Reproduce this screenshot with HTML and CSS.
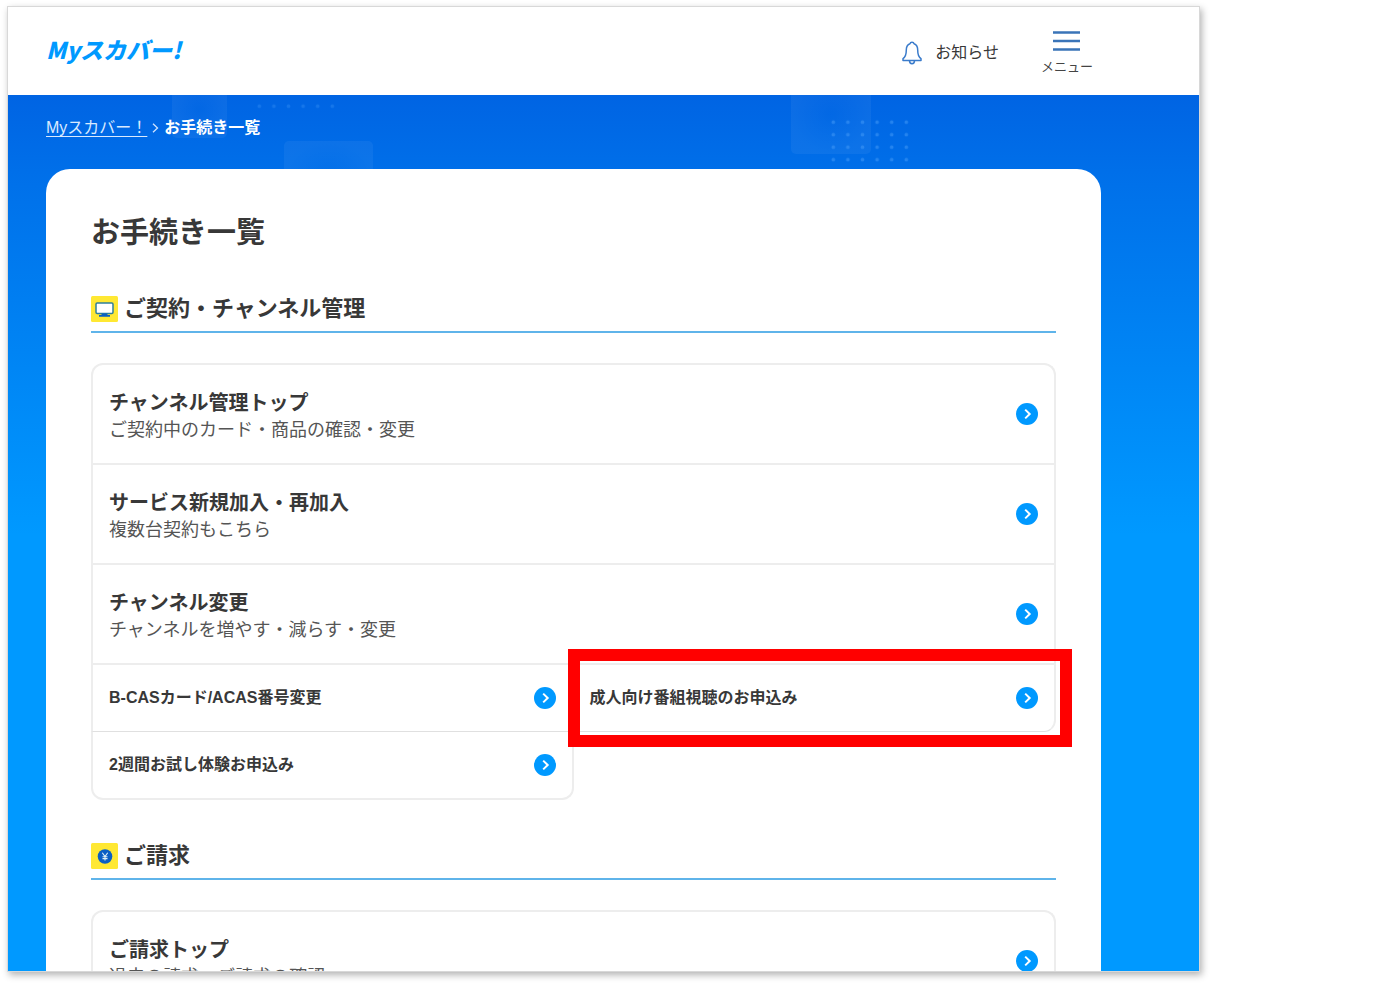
FILE: index.html
```html
<!DOCTYPE html>
<html lang="ja">
<head>
<meta charset="utf-8">
<meta name="viewport" content="width=device-width, initial-scale=1">
<title>お手続き一覧</title>
<link rel="stylesheet" href="styles.css">
</head>
<body>
<svg class="defs" aria-hidden="true">
  <symbol id="arrow" viewBox="0 0 22 22">
    <circle cx="11" cy="11" r="11" fill="#0099ff"/>
    <path d="M9.200 6.600 13.700 11l-4.500 4.400" fill="none" stroke="#fff" stroke-width="2"/>
  </symbol>
</svg>
<div class="window">
  <header class="header">
    <a class="logo" href="#">Myスカバー!</a>
    <nav class="header-nav">
      <a class="news" href="#">
        <svg class="bell" viewBox="0 0 20 24" fill="none" stroke="#3a7bcb" stroke-width="1.500" stroke-linejoin="round" aria-hidden="true">
          <path d="M10 1.200c-1.200 0-1.900.7-2.100 1.600C5.300 3.700 4.300 5.900 4.300 9c0 4.500-.8 7-3.300 8.700v1.800h18v-1.800c-2.500-1.700-3.300-4.200-3.300-8.700 0-3.100-1-5.300-3.600-6.200C11.900 1.900 11.200 1.200 10 1.200Z"/>
          <path d="M7.500 19.500c0 4.300 5 4.300 5 0"/>
        </svg>
        <span>お知らせ</span>
      </a>
      <button class="menu" type="button">
        <svg class="burger" viewBox="0 0 27 20" stroke="#3a74b8" stroke-width="2.400" aria-hidden="true"><path d="M0 1.500h27M0 10h27M0 18.500h27"/></svg>
        <span>メニュー</span>
      </button>
    </nav>
  </header>
  <main class="hero">
    <svg class="decor" width="1000" height="75" aria-hidden="true">
      <defs>
        <pattern id="dots" width="14.600" height="12.500" patternUnits="userSpaceOnUse" x="818" y="21">
          <circle cx="7.300" cy="6.200" r="1.800" fill="#3c95f5" fill-opacity=".6"/>
        </pattern>
        <pattern id="dots-faint" width="14.600" height="12.500" patternUnits="userSpaceOnUse" x="244" y="5">
          <circle cx="7.300" cy="6.200" r="1.800" fill="#3c95f5" fill-opacity=".35"/>
        </pattern>
        <radialGradient id="tile"><stop offset="0" stop-color="#fff" stop-opacity=".01"/><stop offset="1" stop-color="#fff" stop-opacity=".05"/></radialGradient>
      </defs>
      <rect x="164" y="-12" width="55" height="55" rx="5" fill="url(#tile)"/>
      <rect x="276" y="46" width="89" height="70" rx="5" fill="url(#tile)"/>
      <rect x="783" y="-20" width="80" height="79" rx="5" fill="url(#tile)"/>
      <rect x="244" y="5" width="87.600" height="12.500" fill="url(#dots-faint)"/>
      <rect x="818" y="21" width="87.600" height="50" fill="url(#dots)"/>
    </svg>
    <nav class="breadcrumb" aria-label="パンくず">
      <a href="#">Myスカバー！</a>
      <svg class="crumb-arrow" viewBox="0 0 7 10" fill="none" stroke="#cfe4ff" stroke-width="1.300" aria-hidden="true"><path d="m1 .8 4.500 4.200L1 9.200"/></svg>
      <strong>お手続き一覧</strong>
    </nav>
    <div class="card">
      <h1 class="page-title">お手続き一覧</h1>
      <section class="section">
        <h2 class="section-title">
          <svg class="section-icon" viewBox="0 0 27 26" aria-hidden="true">
            <rect width="27" height="26" rx="1.500" fill="#ffe833"/>
            <rect x="5" y="7" width="17" height="10.500" rx="1.200" fill="#fff" stroke="#2f7f9c" stroke-width="1.500"/>
            <path d="M10.500 17.500h6v1.500h2.500v1.700h-11v-1.700h2.500z" fill="#0a5fc4"/>
          </svg>
          ご契約・チャンネル管理
        </h2>
        <div class="group">
          <a class="row" href="#"><span class="row-text"><b class="row-title">チャンネル管理トップ</b><span class="row-note">ご契約中のカード・商品の確認・変更</span></span><svg class="arrow" aria-hidden="true"><use href="#arrow"/></svg></a>
          <a class="row" href="#"><span class="row-text"><b class="row-title">サービス新規加入・再加入</b><span class="row-note">複数台契約もこちら</span></span><svg class="arrow" aria-hidden="true"><use href="#arrow"/></svg></a>
          <a class="row" href="#"><span class="row-text"><b class="row-title">チャンネル変更</b><span class="row-note">チャンネルを増やす・減らす・変更</span></span><svg class="arrow" aria-hidden="true"><use href="#arrow"/></svg></a>
        </div>
        <div class="cells">
          <a class="cell cell-left" href="#">B-CASカード/ACAS番号変更<svg class="arrow" aria-hidden="true"><use href="#arrow"/></svg></a>
          <a class="cell cell-right highlighted" href="#">成人向け番組視聴のお申込み<svg class="arrow" aria-hidden="true"><use href="#arrow"/></svg></a>
          <a class="cell cell-last" href="#">2週間お試し体験お申込み<svg class="arrow" aria-hidden="true"><use href="#arrow"/></svg></a>
        </div>
      </section>
      <section class="section">
        <h2 class="section-title">
          <svg class="section-icon" viewBox="0 0 27 26" aria-hidden="true">
            <rect width="27" height="26" rx="1.500" fill="#ffe833"/>
            <circle cx="14" cy="13.500" r="7.300" fill="#0a5fc4"/>
            <path d="m11.300 9.800 2.700 3.700 2.700-3.700M14 13.500v4M11.500 13.700h5M11.500 15.600h5" fill="none" stroke="#dff0f5" stroke-width="1.100"/>
          </svg>
          ご請求
        </h2>
        <div class="group">
          <a class="row" href="#"><span class="row-text"><b class="row-title">ご請求トップ</b><span class="row-note">過去の請求、ご請求の確認</span></span><svg class="arrow" aria-hidden="true"><use href="#arrow"/></svg></a>
        </div>
      </section>
    </div>
  </main>
</div>
</body>
</html>
```
FILE: styles.css
```css
* { box-sizing: border-box; }

body {
  margin: 0;
  height: 100vh;
  padding: 7px 177px 15px 8px;
  background: #fff;
  color: #383838;
  font-family: "Liberation Sans", "Noto Sans CJK JP", sans-serif;
  font-size: 16px;
  line-height: 27px;
}

a { color: inherit; text-decoration: none; }
svg { display: block; flex: none; }
.defs { position: absolute; width: 0; height: 0; }

.window {
  height: 100%;
  display: flex;
  flex-direction: column;
  overflow: hidden;
  background: #fff;
  box-shadow: 0 0 0 1px #d8d8d8, 2px 3px 7px 1px rgba(0, 0, 0, .3);
}

.header {
  flex: none;
  height: 88px;
  display: flex;
  align-items: center;
  justify-content: space-between;
  padding: 0 106px 0 38px;
}
.logo {
  padding-bottom: 4px;
  color: #0099ff;
  font-family: "Noto Sans CJK JP", sans-serif;
  font-size: 23px;
  font-style: italic;
  font-weight: 900;
}
.header-nav { display: flex; align-items: center; gap: 42px; }
.news { display: flex; align-items: center; gap: 13px; padding-top: 3px; }
.bell { width: 20px; height: 24px; }
.menu {
  display: flex;
  flex-direction: column;
  align-items: center;
  gap: 6px;
  padding: 4px 0 0;
  border: 0;
  background: none;
  color: #444;
  font: 13px/18px "Noto Sans CJK JP", sans-serif;
}
.burger { width: 27px; height: 20px; }

.hero {
  position: relative;
  flex: 1 0 auto;
  padding: 0 98px 0 38px;
  background: linear-gradient(#0064e3 0, #0071ea 90px, #0099ff 440px);
}
.decor { position: absolute; top: 0; left: 0; }
.breadcrumb {
  position: relative;
  display: flex;
  align-items: center;
  gap: 5px;
  padding: 19px 0 28px;
  color: #fff;
}
.breadcrumb a { color: #d9eaff; text-decoration: underline; text-underline-offset: 3px; }
.crumb-arrow { width: 7px; height: 10px; }

.card {
  position: relative;
  padding: 43px 45px;
  border-radius: 24px 24px 0 0;
  background: #fff;
}
.page-title { margin: 0 0 42px; font-size: 29px; line-height: 42px; }
.section { margin-bottom: 43px; }
.section-title {
  display: flex;
  align-items: center;
  gap: 6px;
  margin: 0 0 30px;
  padding-bottom: 9px;
  border-bottom: 2px solid #5fb4ea;
  font-size: 22px;
  line-height: 26px;
}
.section-icon { width: 27px; height: 26px; }

.group {
  border: 2px solid #ededed;
  border-bottom: 0;
  border-radius: 12px 12px 0 0;
}
.row {
  display: flex;
  align-items: center;
  justify-content: space-between;
  padding: 0 16px;
  border-bottom: 2px solid #ededed;
}
.row-text { display: grid; padding: 25px 0 19px; }
.row-title { font-size: 20px; line-height: 27px; }
.row-note { color: #555; font-size: 18px; line-height: 27px; }
.arrow { width: 22px; height: 22px; }

.cells { display: grid; grid-template-columns: 1fr 1fr; }
.cell {
  position: relative;
  display: flex;
  align-items: center;
  justify-content: space-between;
  padding: 19px 18px 20px 16px;
  border-bottom: 1px solid #e0e0e0;
  font-weight: 700;
}
.cell-left { border-left: 2px solid #ededed; }
.cell-right {
  padding-right: 16px;
  border-right: 2px solid #ededed;
  border-bottom-right-radius: 12px;
}
.cell-last {
  padding-right: 16px;
  border: 2px solid #ededed;
  border-top: 0;
  border-radius: 0 0 12px 12px;
}
.highlighted { z-index: 1; }
.highlighted::after {
  content: "";
  position: absolute;
  inset: -16px -18px -16px -6px;
  border: 12px solid #f00;
}
```
